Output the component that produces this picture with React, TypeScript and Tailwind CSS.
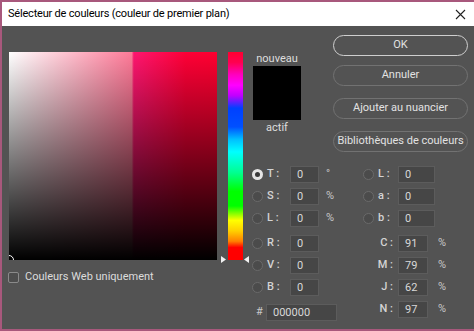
const font = { fontFamily: 'Roboto, "Noto Sans", sans-serif' };

function Radio({ on }: { on?: boolean }) {
  if (on)
    return (
      <div className="w-[11px] h-[11px] rounded-full bg-[#e6e6e6] flex items-center justify-center shrink-0">
        <div className="w-[5px] h-[5px] rounded-full bg-[#3a3a3a]" />
      </div>
    );
  return <div className="w-[11px] h-[11px] rounded-full border border-[#6a6a6a] bg-[#4b4b4b] shrink-0" />;
}

function Field({ value, w }: { value: string; w: string }) {
  return (
    <div className={`${w} h-[17px] bg-[#464646] border border-[#5c5c5c] text-[11px] leading-[15px] pl-[6px] text-[#d8d8d8]`}>
      {value}
    </div>
  );
}

function RadioRow({ label, value, unit, on }: { label: string; value: string; unit?: string; on?: boolean }) {
  return (
    <div className="flex items-center h-[22px]">
      <Radio on={on} />
      <div className="w-[27px] pl-[4px] text-[11px] text-[#d4d4d4] font-medium">{label}</div>
      <Field value={value} w="w-[29px]" />
      <div className="ml-[7px] text-[11px] text-[#c8c8c8]">{unit}</div>
    </div>
  );
}

function LabRow({ label, value }: { label: string; value: string }) {
  return (
    <div className="flex items-center h-[22px]">
      <Radio />
      <div className="w-[24px] pl-[4px] text-[11px] text-[#d4d4d4] font-medium">{label}</div>
      <Field value={value} w="w-[37px]" />
    </div>
  );
}

function CmykRow({ label, value }: { label: string; value: string }) {
  return (
    <div className="flex items-center h-[22px]">
      <div className="w-[35px] pr-[5px] text-right text-[11px] text-[#d4d4d4] font-medium">{label}</div>
      <Field value={value} w="w-[30px]" />
      <div className="ml-[10px] text-[11px] text-[#c8c8c8]">%</div>
    </div>
  );
}

function Btn({ label, primary, className }: { label: string; primary?: boolean; className?: string }) {
  return (
    <div
      className={`w-[135px] h-[21px] rounded-full flex items-center justify-center whitespace-nowrap text-[11px] text-[#e2e2e2] ${
        primary ? "border-[1.5px] border-[#cfcfcf]" : "border border-[#727272]"
      } ${className ?? ""}`}
    >
      {label}
    </div>
  );
}

export default function App() {
  return (
    <div className="w-[474px] h-[331px] flex flex-col border-l-2 border-t-2 border-b-2 border-[#a8587c] overflow-hidden" style={font}>
      {/* title bar */}
      <div className="h-[24px] bg-white flex items-center justify-between pl-[6px] pr-[8px] shrink-0">
        <span className="text-[11px] tracking-[-0.2px] text-black whitespace-nowrap">Sélecteur de couleurs (couleur de premier plan)</span>
        <svg width="11" height="11" viewBox="0 0 11 11">
          <path d="M1 1L10 10M10 1L1 10" stroke="#222" strokeWidth="1.1" />
        </svg>
      </div>

      {/* body */}
      <div className="flex-1 bg-[#535353] flex">
        {/* left: field + hue strip */}
        <div className="w-[248px] pl-[7px] pt-[26px] flex flex-col">
          <div className="flex">
            <div
              className="w-[208px] h-[208px] relative overflow-hidden"
              style={{
                background:
                  "linear-gradient(to bottom, rgba(0,0,0,0) 0%, #000 100%), linear-gradient(to right, #ffffff 0%, #ff7a98 59%, #ff1670 60%, #ff0036 85%, #ff0030 100%)",
              }}
            >
              <div className="absolute left-[-5px] bottom-[-5px] w-[10px] h-[10px] rounded-full border border-white" />
            </div>
            <div className="relative ml-[4px] w-[29px] h-[208px] flex justify-center">
              <div
                className="w-[15px] h-[208px]"
                style={{
                  background:
                    "linear-gradient(to bottom, #ff0030 0%, #ff0050 5%, #ff00c0 11%, #ff00ff 16%, #c000ff 21%, #0040ff 27%, #0050ff 36%, #00c0ff 42%, #00ffff 48%, #00ff90 58%, #00ff00 67%, #00ff00 74%, #ffff00 81%, #ffd000 86%, #ff8000 91%, #ff0000 94%, #ff0000 100%)",
                }}
              />
              <svg className="absolute left-0 bottom-[-3px]" width="5" height="7" viewBox="0 0 5 7">
                <path d="M0 0L5 3.5L0 7Z" fill="#f2f2f2" />
              </svg>
              <svg className="absolute right-[1px] bottom-[-3px]" width="5" height="7" viewBox="0 0 5 7">
                <path d="M5 0L0 3.5L5 7Z" fill="#f2f2f2" />
              </svg>
            </div>
          </div>
          <div className="flex items-center mt-[9px]">
            <div className="w-[11px] h-[11px] rounded-[2px] border border-[#8a8a8a] bg-[#4d4d4d] -ml-[1px]" />
            <span className="ml-[6px] text-[11px] text-[#dcdcdc]">Couleurs Web uniquement</span>
          </div>
        </div>

        {/* right part */}
        <div className="flex-1 flex flex-col">
          <div className="h-[137px] flex">
            <div className="ml-[3px] w-[48px] pt-[26px] flex flex-col items-center">
              <div className="h-[14px] leading-[14px] text-[11px] text-[#dedede]">nouveau</div>
              <div className="w-[48px] h-[54px] bg-black" />
              <div className="h-[16px] leading-[16px] text-[11px] text-[#dedede]">actif</div>
            </div>
            <div className="ml-[32px] pt-[9px] flex flex-col">
              <Btn label="OK" primary />
              <Btn label="Annuler" className="mt-[9px]" />
              <Btn label="Ajouter au nuancier" className="mt-[12px]" />
              <Btn label="Bibliothèques de couleurs" className="mt-[12px]" />
            </div>
          </div>

          <div className="flex">
            <div className="ml-[2px] w-[111px] flex flex-col">
              <RadioRow on label="T :" value="0" unit="°" />
              <RadioRow label="S :" value="0" unit="%" />
              <RadioRow label="L :" value="0" unit="%" />
              <div className="h-[3px]" />
              <RadioRow label="R :" value="0" />
              <RadioRow label="V :" value="0" />
              <RadioRow label="B :" value="0" />
              <div className="h-[3px]" />
              <div className="flex items-center h-[22px]">
                <div className="w-[14px] pl-[4px] text-[11px] text-[#c8c8c8]">#</div>
                <div className="w-[71px] h-[17px] bg-[#464646] border border-[#5c5c5c] text-[11px] leading-[15px] pl-[6px] text-[#d8d8d8]">
                  000000
                </div>
              </div>
            </div>
            <div className="flex flex-col">
              <LabRow label="L :" value="0" />
              <LabRow label="a :" value="0" />
              <LabRow label="b :" value="0" />
              <div className="h-[3px]" />
              <CmykRow label="C :" value="91" />
              <CmykRow label="M :" value="79" />
              <CmykRow label="J :" value="62" />
              <CmykRow label="N :" value="97" />
            </div>
          </div>
        </div>
      </div>
    </div>
  );
}
